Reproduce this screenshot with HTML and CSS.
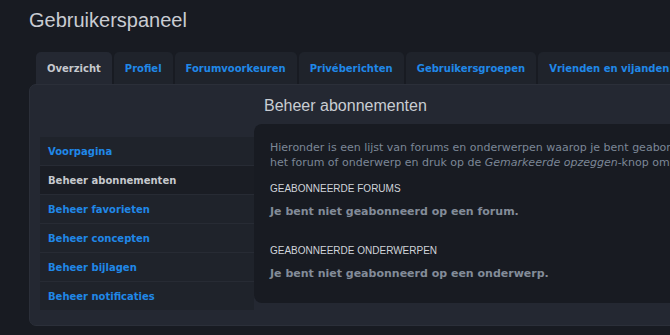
FILE: index.html
```html
<!DOCTYPE html>
<html lang="nl">
<head>
    <meta charset="UTF-8">
    <meta name="viewport" content="width=device-width, initial-scale=1.0">
    <title>Gebruikerspaneel</title>
    <link rel="stylesheet" href="styles.css">
</head>
<body>
    <div class="page">
        <h2 class="page-title">Gebruikerspaneel</h2>

        <ul class="tabs">
            <li class="tab active"><a href="#">Overzicht</a></li>
            <li class="tab"><a href="#">Profiel</a></li>
            <li class="tab"><a href="#">Forumvoorkeuren</a></li>
            <li class="tab"><a href="#">Privéberichten</a></li>
            <li class="tab"><a href="#">Gebruikersgroepen</a></li>
            <li class="tab"><a href="#">Vrienden en vijanden</a></li>
        </ul>

        <div class="panel">
            <h2 class="panel-title">Beheer abonnementen</h2>

            <div class="panel-body">
                <ul class="menu">
                    <li><a href="#">Voorpagina</a></li>
                    <li class="active"><span>Beheer abonnementen</span></li>
                    <li><a href="#">Beheer favorieten</a></li>
                    <li><a href="#">Beheer concepten</a></li>
                    <li><a href="#">Beheer bijlagen</a></li>
                    <li><a href="#">Beheer notificaties</a></li>
                </ul>

                <div class="content">
                    <p class="intro">Hieronder is een lijst van forums en onderwerpen waarop je bent geabonneerd. Om je af te melden, selecteer<br>het forum of onderwerp en druk op de <em>Gemarkeerde opzeggen</em>-knop om je abonnement op te zeggen.</p>

                    <h3>Geabonneerde forums</h3>
                    <p class="empty">Je bent niet geabonneerd op een forum.</p>

                    <h3 class="spaced">Geabonneerde onderwerpen</h3>
                    <p class="empty">Je bent niet geabonneerd op een onderwerp.</p>
                </div>
            </div>
        </div>
    </div>
</body>
</html>
```

FILE: styles.css
```css
body {
    margin: 0;
    background-color: #181b22;
    font-family: 'DejaVu Sans', Verdana, sans-serif;
    font-size: 11px;
    overflow: hidden;
}

.page {
    padding: 9px 0 0 29px;
    width: 900px;
}

.page-title {
    margin: 0 0 20px;
    font-family: 'Liberation Sans', Arial, sans-serif;
    font-weight: normal;
    font-size: 20px;
    line-height: 23px;
    color: #c9ccd2;
}

.tabs {
    list-style: none;
    margin: 0;
    padding: 0 0 0 7px;
    display: flex;
}

.tab {
    margin-right: 2px;
    background: #1f232b;
    border-radius: 5px 5px 0 0;
    height: 32px;
}

.tab a {
    display: block;
    padding: 0 11px;
    line-height: 34px;
    font-size: 10px;
    font-weight: bold;
    color: #2088e8;
    text-decoration: none;
}

.tab.active {
    background: #242832;
}

.tab.active a {
    color: #c6c9ce;
}

.panel {
    background: #242832;
    border: 1px solid #2b2f39;
    border-radius: 7px;
    height: 242px;
    box-sizing: border-box;
}

.panel-title {
    margin: 0;
    padding: 11px 0 0 234px;
    font-family: 'Liberation Sans', Arial, sans-serif;
    font-weight: normal;
    font-size: 16px;
    line-height: 20px;
    color: #c9cdd3;
}

.panel-body {
    display: flex;
    align-items: flex-start;
    margin-top: 8px;
    padding-left: 10px;
}

.menu {
    list-style: none;
    margin: 13px 0 0;
    padding: 0;
    width: 214px;
    flex-shrink: 0;
}

.menu li {
    background: #1f232b;
    border-bottom: 1px solid #272b34;
    height: 28px;
    line-height: 29px;
    padding-left: 8px;
    font-size: 10px;
    font-weight: bold;
}

.menu li:last-child {
    border-bottom: none;
}

.menu a {
    color: #2088e8;
    text-decoration: none;
}

.menu li.active {
    background: #1a1d24;
    color: #c6c9ce;
}

.content {
    flex: 1;
    background: #181b22;
    border-radius: 8px 0 0 8px;
    height: 179px;
    box-sizing: border-box;
    padding: 16px 16px 0;
    color: #7c8797;
    white-space: nowrap;
    overflow: hidden;
}

.intro {
    margin: 0;
    line-height: 15px;
}

.content h3 {
    margin: 13px 0 0;
    font-family: 'Liberation Sans', Arial, sans-serif;
    font-weight: normal;
    font-size: 10px;
    line-height: 12px;
    text-transform: uppercase;
    color: #d0d4da;
}

.content h3.spaced {
    margin-top: 27px;
}

.empty {
    margin: 10px 0 0;
    font-weight: bold;
    line-height: 13px;
    color: #838c99;
}
```
